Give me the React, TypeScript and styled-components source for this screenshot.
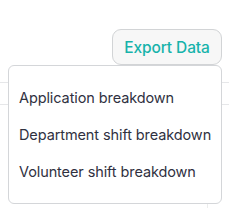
import React from 'react';
import styled, { createGlobalStyle } from 'styled-components';

const GlobalStyle = createGlobalStyle`
	html, body {
		margin: 0;
		padding: 0;
		background: #ffffff;
		font-family: Inter, 'Noto Sans', sans-serif;
	}
`;

const items = [
	'Application breakdown',
	'Department shift breakdown',
	'Volunteer shift breakdown',
];

const App = () => {
	return (
		<Page>
			<GlobalStyle />
			<Toolbar>
				<ExportWrap>
					<ExportButton type='button'>Export Data</ExportButton>
					<Menu>
						{items.map(label => (
							<MenuItem key={label}>{label}</MenuItem>
						))}
					</Menu>
				</ExportWrap>
			</Toolbar>
			<Table>
				<TableRow $height={16} />
				<TableRow $height={21} />
				<TableRow $height={98} $last />
				<TableFoot />
			</Table>
		</Page>
	);
};

const Page = styled.div`
	width: 229px;
	height: 208px;
	padding-top: 29px;
	box-sizing: border-box;
	overflow: hidden;
`;

const Toolbar = styled.div`
	display: flex;
	justify-content: flex-end;
	padding-right: 7px;
`;

const ExportWrap = styled.div`
	position: relative;
`;

const ExportButton = styled.button`
	width: 110px;
	height: 36px;
	border: 1px solid #d2d4d6;
	border-radius: 9px;
	background: #f7f7f7;
	color: #17b3ab;
	font-family: Inter, 'Noto Sans', sans-serif;
	font-size: 15.5px;
	font-weight: 500;
	letter-spacing: -0.1px;
	padding: 0;
	cursor: pointer;
`;

const Menu = styled.div`
	position: absolute;
	top: 100%;
	right: 0;
	z-index: 2;
	width: 214px;
	height: 139px;
	box-sizing: border-box;
	padding-top: 23px;
	background: #ffffff;
	border: 1px solid #d4d6d9;
	border-radius: 6px;
	display: flex;
	flex-direction: column;
`;

const MenuItem = styled.div`
	height: 37px;
	padding-left: 10px;
	display: flex;
	align-items: flex-start;
	color: #30313f;
	font-size: 14.5px;
	letter-spacing: -0.1px;
	line-height: 18px;
	cursor: pointer;
`;

const Table = styled.div`
	margin-top: 1px;
`;

const TableRow = styled.div<{ $height: number; $last?: boolean }>`
	height: ${p => p.$height}px;
	border-bottom: ${p => (p.$last ? 'none' : '1px solid #e6e7e9')};
`;

const TableFoot = styled.div`
	margin-left: 207px;
	width: 1px;
	height: 10px;
	background: #eceded;
`;

export default App;
